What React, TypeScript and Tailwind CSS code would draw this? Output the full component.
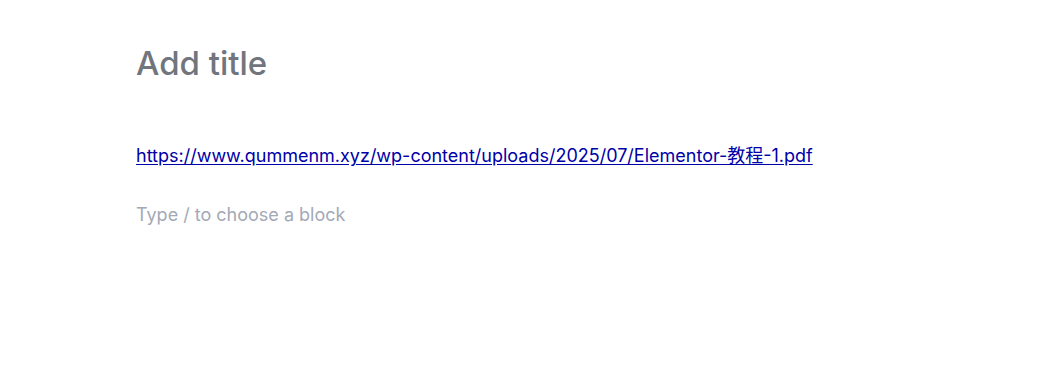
import React from 'react';

export default function App() {
    return (
        <div className="min-h-[389px] bg-white">
            <div className="pl-[136px] pt-[40px] font-['Inter',sans-serif]">
                <h1 className="text-[33px] leading-[46px] font-medium text-[#71757e]">Add title</h1>
                <p className="mt-[56px] text-[18px] leading-[28px]">
                    <a href="#" className="text-[#0000a8] underline underline-offset-2 font-['Inter','Noto_Sans_CJK_SC',sans-serif]">
                        https://www.qummenm.xyz/wp-content/uploads/2025/07/Elementor-教程-1.pdf
                    </a>
                </p>
                <p className="mt-[31px] text-[18px] leading-[28px] text-[#a3a9b6]">Type / to choose a block</p>
            </div>
        </div>
    );
}
